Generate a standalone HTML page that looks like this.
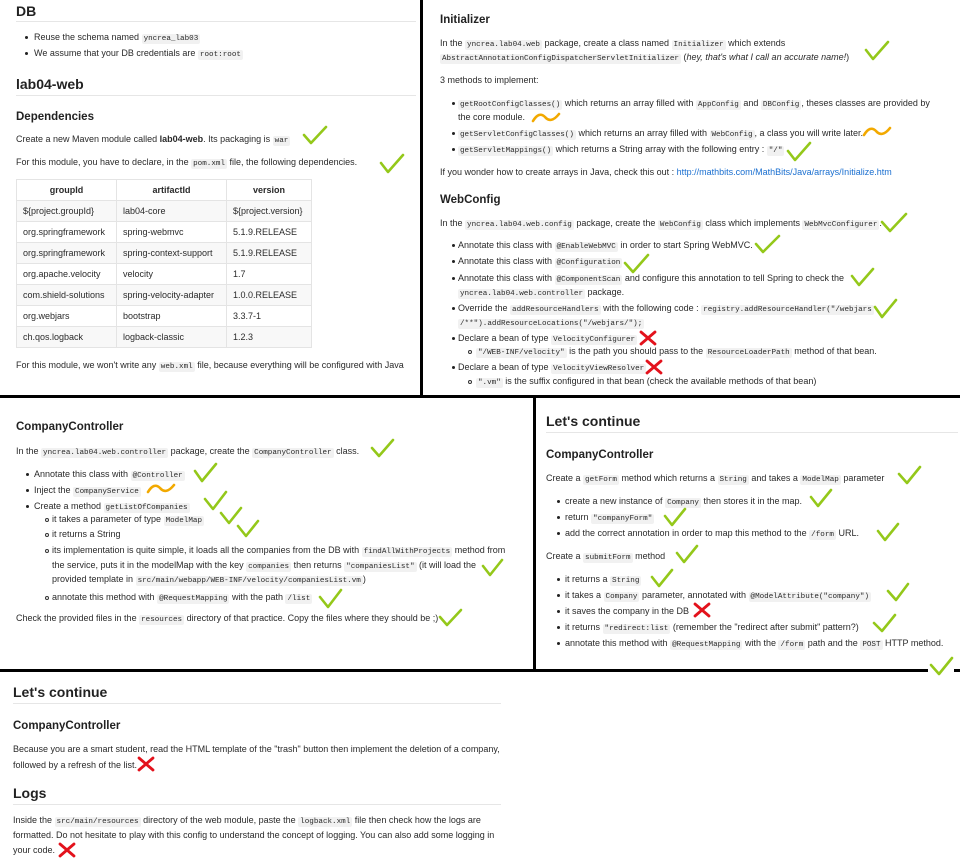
<!DOCTYPE html>
<html><head><meta charset="utf-8"><style>
body{margin:0;width:960px;height:860px;background:#fff;position:relative;overflow:hidden;font-family:"Liberation Sans",Arial,sans-serif;color:#2a2a2a;font-size:9px}
.t{position:absolute;white-space:nowrap;line-height:12px}
.h1{position:absolute;font-size:14px;font-weight:bold;color:#222;line-height:16px}
.h2{position:absolute;font-size:11.5px;font-weight:bold;color:#222;line-height:14px}
.hr{position:absolute;height:1px;background:#e6e6e6}
code{font-family:"Liberation Mono",monospace;font-size:7.6px;background:#f1f1f1;padding:1px 2px;border-radius:2px}
.b{position:absolute;width:3px;height:3px;border-radius:50%;background:#222}
.c{position:absolute;width:3px;height:3px;border-radius:50%;border:1px solid #333;box-sizing:border-box;width:4px;height:4px}
.L{position:absolute;background:#000}
svg{position:absolute;overflow:visible}
table{position:absolute;border-collapse:collapse;font-size:9px}
td,th{border:1px solid #e4e4e4;height:20px;padding:0 6px;text-align:left}
th{text-align:center}
tr:nth-child(even) td{background:#f8f8f8}
a{color:#1a6fd0;text-decoration:none}
</style></head><body>

<!-- separator lines -->
<div class="L" style="left:420px;top:0;width:3px;height:398px"></div>
<div class="L" style="left:0;top:395px;width:960px;height:3px"></div>
<div class="L" style="left:533px;top:397px;width:3px;height:272px"></div>
<div class="L" style="left:0;top:669px;width:928px;height:3px"></div>
<div class="L" style="left:954px;top:669px;width:6px;height:3px"></div>

<!-- Top-left -->
<div class="h1" style="left:16px;top:3px">DB</div>
<div class="hr" style="left:16px;top:21px;width:400px"></div>
<div class="b" style="left:25px;top:36px"></div><div class="t" style="left:34px;top:31px">Reuse the schema named <code>yncrea_lab03</code></div>
<div class="b" style="left:25px;top:52px"></div><div class="t" style="left:34px;top:47px">We assume that your DB credentials are <code>root:root</code></div>
<div class="h1" style="left:16px;top:76px">lab04-web</div>
<div class="hr" style="left:16px;top:95px;width:400px"></div>
<div class="h2" style="left:16px;top:110px">Dependencies</div>
<div class="t" style="left:16px;top:133px">Create a new Maven module called <b>lab04-web</b>. Its packaging is <code>war</code></div>
<div class="t" style="left:16px;top:156px">For this module, you have to declare, in the <code>pom.xml</code> file, the following dependencies.</div>
<table style="left:16px;top:179px;width:296px">
<tr><th style="width:87px">groupId</th><th style="width:97px">artifactId</th><th>version</th></tr>
<tr><td>${project.groupId}</td><td>lab04-core</td><td>${project.version}</td></tr>
<tr><td>org.springframework</td><td>spring-webmvc</td><td>5.1.9.RELEASE</td></tr>
<tr><td>org.springframework</td><td>spring-context-support</td><td>5.1.9.RELEASE</td></tr>
<tr><td>org.apache.velocity</td><td>velocity</td><td>1.7</td></tr>
<tr><td>com.shield-solutions</td><td>spring-velocity-adapter</td><td>1.0.0.RELEASE</td></tr>
<tr><td>org.webjars</td><td>bootstrap</td><td>3.3.7-1</td></tr>
<tr><td>ch.qos.logback</td><td>logback-classic</td><td>1.2.3</td></tr>
</table>
<div class="t" style="left:16px;top:359px">For this module, we won't write any <code>web.xml</code> file, because everything will be configured with Java</div>

<!-- Top-right -->
<div class="h2" style="left:440px;top:13px">Initializer</div>
<div class="t" style="left:440px;top:37px">In the <code>yncrea.lab04.web</code> package, create a class named <code>Initializer</code> which extends</div>
<div class="t" style="left:440px;top:51px"><code>AbstractAnnotationConfigDispatcherServletInitializer</code> (<i>hey, that's what I call an accurate name!</i>)</div>
<div class="t" style="left:440px;top:74px">3 methods to implement:</div>
<div class="b" style="left:452px;top:102px"></div><div class="t" style="left:458px;top:97px"><code>getRootConfigClasses()</code> which returns an array filled with <code>AppConfig</code> and <code>DBConfig</code>, theses classes are provided by</div>
<div class="t" style="left:458px;top:111px">the core module.</div>
<div class="b" style="left:452px;top:132px"></div><div class="t" style="left:458px;top:127px"><code>getServletConfigClasses()</code> which returns an array filled with <code>WebConfig</code>, a class you will write later.</div>
<div class="b" style="left:452px;top:148px"></div><div class="t" style="left:458px;top:143px"><code>getServletMappings()</code> which returns a String array with the following entry : <code>"/"</code></div>
<div class="t" style="left:440px;top:166px">If you wonder how to create arrays in Java, check this out : <a>http://mathbits.com/MathBits/Java/arrays/Initialize.htm</a></div>
<div class="h2" style="left:440px;top:193px">WebConfig</div>
<div class="t" style="left:440px;top:217px">In the <code>yncrea.lab04.web.config</code> package, create the <code>WebConfig</code> class which implements <code>WebMvcConfigurer</code>.</div>
<div class="b" style="left:452px;top:244px"></div><div class="t" style="left:458px;top:239px">Annotate this class with <code>@EnableWebMVC</code> in order to start Spring WebMVC.</div>
<div class="b" style="left:452px;top:260px"></div><div class="t" style="left:458px;top:255px">Annotate this class with <code>@Configuration</code></div>
<div class="b" style="left:452px;top:277px"></div><div class="t" style="left:458px;top:272px">Annotate this class with <code>@ComponentScan</code> and configure this annotation to tell Spring to check the</div>
<div class="t" style="left:458px;top:286px"><code>yncrea.lab04.web.controller</code> package.</div>
<div class="b" style="left:452px;top:307px"></div><div class="t" style="left:458px;top:302px">Override the <code>addResourceHandlers</code> with the following code : <code>registry.addResourceHandler("/webjars</code></div>
<div class="t" style="left:458px;top:316px"><code>/**").addResourceLocations("/webjars/");</code></div>
<div class="b" style="left:452px;top:337px"></div><div class="t" style="left:458px;top:332px">Declare a bean of type <code>VelocityConfigurer</code></div>
<div class="c" style="left:468px;top:350px"></div><div class="t" style="left:476px;top:345px"><code>"/WEB-INF/velocity"</code> is the path you should pass to the <code>ResourceLoaderPath</code> method of that bean.</div>
<div class="b" style="left:452px;top:366px"></div><div class="t" style="left:458px;top:361px">Declare a bean of type <code>VelocityViewResolver</code></div>
<div class="c" style="left:468px;top:380px"></div><div class="t" style="left:476px;top:375px"><code>".vm"</code> is the suffix configured in that bean (check the available methods of that bean)</div>

<!-- Bottom-left -->
<div class="h2" style="left:16px;top:420px">CompanyController</div>
<div class="t" style="left:16px;top:445px">In the <code>yncrea.lab04.web.controller</code> package, create the <code>CompanyController</code> class.</div>
<div class="b" style="left:26px;top:473px"></div><div class="t" style="left:34px;top:468px">Annotate this class with <code>@Controller</code></div>
<div class="b" style="left:26px;top:489px"></div><div class="t" style="left:34px;top:484px">Inject the <code>CompanyService</code></div>
<div class="b" style="left:26px;top:505px"></div><div class="t" style="left:34px;top:500px">Create a method <code>getListOfCompanies</code></div>
<div class="c" style="left:45px;top:518px"></div><div class="t" style="left:52px;top:513px">it takes a parameter of type <code>ModelMap</code></div>
<div class="c" style="left:45px;top:533px"></div><div class="t" style="left:52px;top:528px">it returns a String</div>
<div class="c" style="left:45px;top:549px"></div><div class="t" style="left:52px;top:544px">its implementation is quite simple, it loads all the companies from the DB with <code>findAllWithProjects</code> method from</div>
<div class="t" style="left:52px;top:559px">the service, puts it in the modelMap with the key <code>companies</code> then returns <code>"companiesList"</code> (it will load the</div>
<div class="t" style="left:52px;top:573px">provided template in <code>src/main/webapp/WEB-INF/velocity/companiesList.vm</code>)</div>
<div class="c" style="left:45px;top:596px"></div><div class="t" style="left:52px;top:591px">annotate this method with <code>@RequestMapping</code> with the path <code>/list</code></div>
<div class="t" style="left:16px;top:612px">Check the provided files in the <code>resources</code> directory of that practice. Copy the files where they should be ;)</div>

<!-- Bottom-right -->
<div class="h1" style="left:546px;top:413px">Let's continue</div>
<div class="hr" style="left:546px;top:432px;width:412px"></div>
<div class="h2" style="left:546px;top:448px">CompanyController</div>
<div class="t" style="left:546px;top:472px">Create a <code>getForm</code> method which returns a <code>String</code> and takes a <code>ModelMap</code> parameter</div>
<div class="b" style="left:557px;top:500px"></div><div class="t" style="left:565px;top:495px">create a new instance of <code>Company</code> then stores it in the map.</div>
<div class="b" style="left:557px;top:516px"></div><div class="t" style="left:565px;top:511px">return <code>"companyForm"</code></div>
<div class="b" style="left:557px;top:532px"></div><div class="t" style="left:565px;top:527px">add the correct annotation in order to map this method to the <code>/form</code> URL.</div>
<div class="t" style="left:546px;top:550px">Create a <code>submitForm</code> method</div>
<div class="b" style="left:557px;top:578px"></div><div class="t" style="left:565px;top:573px">it returns a <code>String</code></div>
<div class="b" style="left:557px;top:594px"></div><div class="t" style="left:565px;top:589px">it takes a <code>Company</code> parameter, annotated with <code>@ModelAttribute("company")</code></div>
<div class="b" style="left:557px;top:610px"></div><div class="t" style="left:565px;top:605px">it saves the company in the DB</div>
<div class="b" style="left:557px;top:626px"></div><div class="t" style="left:565px;top:621px">it returns <code>"redirect:list</code> (remember the "redirect after submit" pattern?)</div>
<div class="b" style="left:557px;top:642px"></div><div class="t" style="left:565px;top:637px">annotate this method with <code>@RequestMapping</code> with the <code>/form</code> path and the <code>POST</code> HTTP method.</div>

<!-- Bottom -->
<div class="h1" style="left:13px;top:684px">Let's continue</div>
<div class="hr" style="left:13px;top:703px;width:488px"></div>
<div class="h2" style="left:13px;top:719px">CompanyController</div>
<div class="t" style="left:13px;top:743px">Because you are a smart student, read the HTML template of the "trash" button then implement the deletion of a company,</div>
<div class="t" style="left:13px;top:759px">followed by a refresh of the list.</div>
<div class="h1" style="left:13px;top:785px">Logs</div>
<div class="hr" style="left:13px;top:804px;width:488px"></div>
<div class="t" style="left:13px;top:814px">Inside the <code>src/main/resources</code> directory of the web module, paste the <code>logback.xml</code> file then check how the logs are</div>
<div class="t" style="left:13px;top:829px">formatted. Do not hesitate to play with this config to understand the concept of logging. You can also add some logging in</div>
<div class="t" style="left:13px;top:844px">your code.</div>

<!-- marks -->
<svg width="960" height="860" style="left:0;top:0" viewBox="0 0 960 860">
<g fill="none" stroke="#94c81a" stroke-width="2.6" stroke-linecap="round" stroke-linejoin="round">
<path d="M304 135 l7 8 l15 -16"/>
<path d="M381 163 l7 9 l15 -17"/>
<path d="M866 50 l7 9 l15 -17"/>
<path d="M788 151 l7 9 l15 -17"/>
<path d="M882 222 l8 9 l16 -17"/>
<path d="M756 244 l7 8 l16 -16"/>
<path d="M625 263 l8 9 l15 -17"/>
<path d="M852 276 l7 9 l14 -16"/>
<path d="M875 307 l7 10 l14 -17"/>
<path d="M372 448 l7 8 l14 -16"/>
<path d="M195 471 l7 10 l14 -17"/>
<path d="M205 499 l8 10 l13 -17"/>
<path d="M221 513 l8 10 l12 -15"/>
<path d="M238 526 l8 10 l12 -15"/>
<path d="M483 566 l7 9 l12 -15"/>
<path d="M320 597 l8 10 l13 -17"/>
<path d="M440 617 l7 8 l14 -15"/>
<path d="M899 474 l8 9 l13 -16"/>
<path d="M811 497 l7 9 l13 -16"/>
<path d="M665 516 l7 9 l13 -16"/>
<path d="M878 531 l7 9 l13 -16"/>
<path d="M677 553 l7 9 l13 -16"/>
<path d="M652 577 l7 9 l13 -16"/>
<path d="M888 591 l8 9 l12 -16"/>
<path d="M874 623 l8 8 l13 -16"/>
<path d="M931 665 l8 9 l13 -16"/>
</g>
<g fill="none" stroke="#f2a900" stroke-width="2.6" stroke-linecap="round">
<path d="M533 121 q6 -10 12 -4 q6 7 14 -3"/>
<path d="M864 135 q6 -10 12 -4 q6 7 14 -3"/>
<path d="M148 492 q6 -10 12 -4 q6 7 14 -3"/>
</g>
<g stroke="#e3121c" stroke-width="2.8" stroke-linecap="round">
<path d="M641 332 l14 12 M655 332 l-14 12"/>
<path d="M647 361 l14 12 M661 361 l-14 12"/>
<path d="M695 604 l14 12 M709 604 l-14 12"/>
<path d="M139 758 l14 12 M153 758 l-14 12"/>
<path d="M60 844 l14 12 M74 844 l-14 12"/>
</g>
</svg>
</body></html>
